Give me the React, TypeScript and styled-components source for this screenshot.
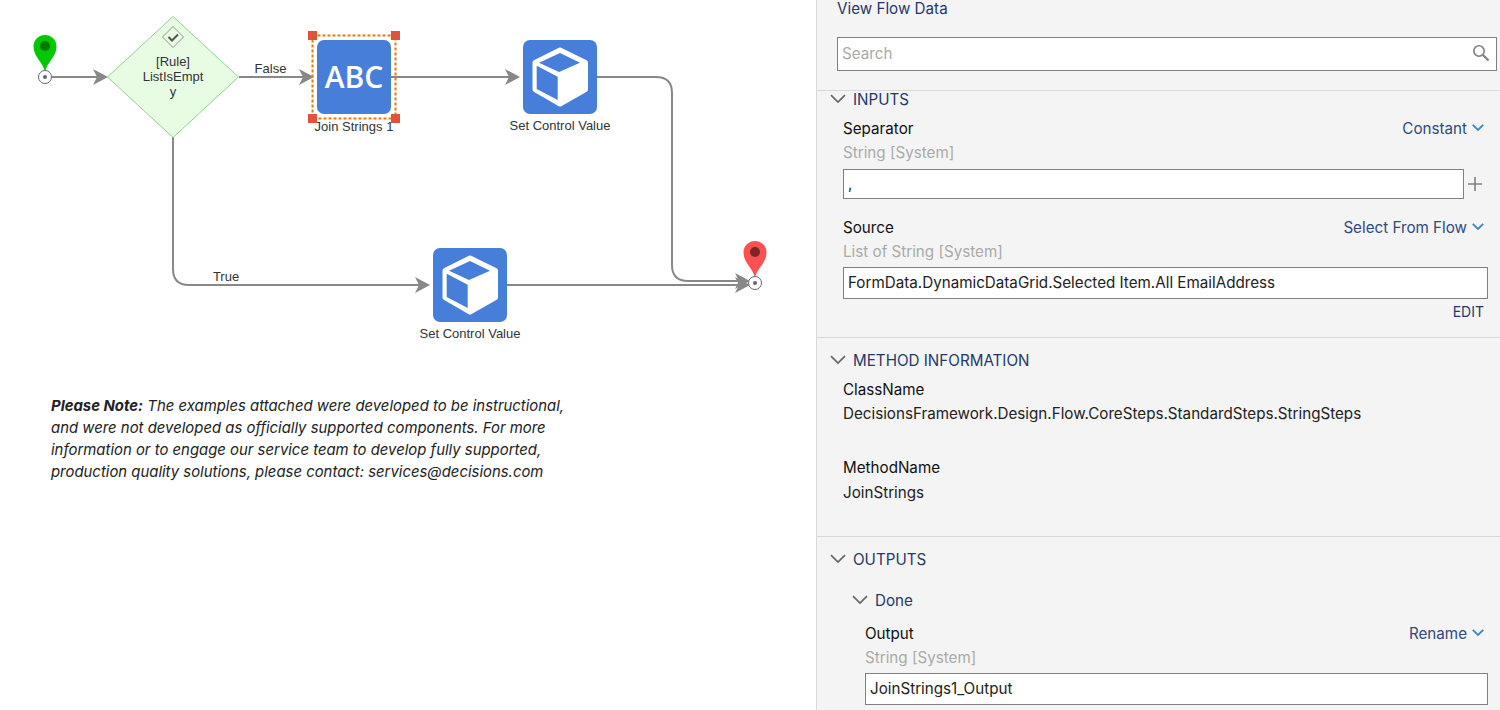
import React from "react";
import styled, { createGlobalStyle } from "styled-components";

const Global = createGlobalStyle`
  html, body { margin: 0; padding: 0; height: 710px; overflow: hidden; background: #fff; }
  * { box-sizing: border-box; }
`;

const Page = styled.div`
  display: flex;
  width: 1500px;
  height: 710px;
  overflow: hidden;
`;

const Canvas = styled.div`
  position: relative;
  width: 816px;
  flex: none;
  padding: 395px 0 0 51px;
  background: #fff;
`;

const Wires = styled.svg`
  position: absolute;
  left: 0;
  top: 0;
`;

const Note = styled.p`
  margin: 0;
  width: 560px;
  font: italic 14.9px/22px Inter, sans-serif;
  color: #222;
  white-space: nowrap;
  b { font-weight: 700; }
`;

const NodeLabel = styled.span<{ $x: number; $y: number }>`
  position: absolute;
  left: ${(p) => p.$x}px;
  top: ${(p) => p.$y}px;
  transform: translate(-50%, -50%);
  font: 13px/15px "Liberation Sans", Arial, sans-serif;
  color: #333;
  white-space: nowrap;
  text-align: center;
`;

const StepIcon = styled.div<{ $x: number; $y: number }>`
  position: absolute;
  left: ${(p) => p.$x}px;
  top: ${(p) => p.$y}px;
  width: 74px;
  height: 74px;
  border-radius: 7px;
  background: #477ed9;
  color: #fff;
  display: flex;
  align-items: center;
  justify-content: center;
`;

const AbcText = styled.span`
  font: 600 30px/1 "Open Sans", sans-serif;
  color: #fff;
`;

const SelectionFrame = styled.svg`
  position: absolute;
  left: 310px;
  top: 32px;
`;

const Handle = styled.span<{ $x: number; $y: number }>`
  position: absolute;
  left: ${(p) => p.$x}px;
  top: ${(p) => p.$y}px;
  width: 9px;
  height: 9px;
  background: #e0533a;
`;

const Panel = styled.aside`
  flex: 1;
  height: 710px;
  background: #f4f4f4;
  border-left: 1px solid #d9d9d9;
  font-family: Inter, sans-serif;
  font-size: 15.2px;
  color: #111;
  overflow: hidden;
`;

const Top = styled.div`
  padding: 0 3px 0 20px;
  height: 73px;
`;

const TopLink = styled.div`
  height: 17px;
  line-height: 17px;
  color: #26386b;
`;

const SearchBox = styled.div`
  margin-top: 20px;
  height: 34px;
  background: #fff;
  border: 1px solid #808080;
  display: flex;
  align-items: center;
  justify-content: space-between;
  padding: 0 6px 2px 4px;
  color: #aaa;
`;

const Section = styled.section<{ $h: number; $line?: boolean; $mt?: number }>`
  height: ${(p) => p.$h}px;
  margin-top: ${(p) => p.$mt ?? 0}px;
  border-top: ${(p) => (p.$line ? "1px solid #d9d9d9" : "none")};
  padding: 0 12px 0 13px;
`;

const SectionHead = styled.div<{ $mt: number }>`
  margin-top: ${(p) => p.$mt}px;
  height: 18px;
  display: flex;
  align-items: center;
  gap: 7px;
  color: #26386b;
`;

const SubHead = styled(SectionHead)`
  padding-left: 22px;
`;

const FieldHead = styled.div<{ $mt: number; $indent?: number }>`
  margin-top: ${(p) => p.$mt}px;
  padding-left: ${(p) => 13 + (p.$indent ?? 0)}px;
  padding-right: 4px;
  height: 20px;
  display: flex;
  align-items: center;
  justify-content: space-between;
`;

const Mode = styled.span`
  display: flex;
  align-items: center;
  gap: 5px;
  color: #2f4a80;
`;

const TypeHint = styled.div<{ $indent?: number }>`
  margin-top: 5px;
  padding-left: ${(p) => 13 + (p.$indent ?? 0)}px;
  height: 20px;
  line-height: 20px;
  color: #aaa;
`;

const InputRow = styled.div<{ $indent?: number; $mt: number }>`
  margin-top: ${(p) => p.$mt}px;
  margin-left: ${(p) => 13 + (p.$indent ?? 0)}px;
  display: flex;
  align-items: center;
`;

const TextBox = styled.div<{ $h: number }>`
  flex: 1;
  height: ${(p) => p.$h}px;
  line-height: ${(p) => p.$h - 2}px;
  background: #fff;
  border: 1px solid #808080;
  padding-left: 4px;
  white-space: nowrap;
  color: #222;
`;

const PlusMark = styled.span`
  width: 24px;
  padding-right: 6px;
  display: flex;
  justify-content: flex-end;
  color: #808080;
`;

const EditLink = styled.div`
  margin-top: 4px;
  text-align: right;
  height: 18px;
  line-height: 18px;
  font-size: 14px;
  color: #26386b;
  padding-right: 4px;
`;

const Value = styled.div<{ $mt: number; $strong?: boolean }>`
  margin-top: ${(p) => p.$mt}px;
  padding-left: 13px;
  height: 20px;
  line-height: 20px;
  color: ${(p) => (p.$strong ? "#111" : "#222")};
  white-space: nowrap;
`;

const Chevron = ({ color = "#666", w = 16 }: { color?: string; w?: number }) => (
  <svg width={w} height={w * 0.6} viewBox="0 0 16 9.6" fill="none">
    <path d="M1 1.2 L8 8 L15 1.2" stroke={color} strokeWidth={w < 14 ? 2.4 : 1.7} />
  </svg>
);

const Cube = () => (
  <svg width="74" height="74" viewBox="0 0 74 74">
    <path d="M37 10 L62.500 22.500 V49.500 L37 64 L12 49.500 V22.500 Z" fill="#fff" stroke="#fff" strokeWidth="5" strokeLinejoin="round" />
    <path d="M37 13 L57 22.7 L36 32 L16 22.7 Z" fill="#477ed9" />
    <path d="M13.7 25.7 L34.7 36.7 V60 L13.7 49 Z" fill="#477ed9" />
  </svg>
);

const wire = "#888";

const Arrow = ({ x, y }: { x: number; y: number }) => (
  <path d={`M${x} ${y} L${x - 15} ${y - 8} L${x - 11} ${y} L${x - 15} ${y + 8} Z`} fill={wire} />
);

const Pin = ({ x, top, fill, dot }: { x: number; top: number; fill: string; dot: string }) => (
  <g transform={`translate(${x} ${top})`}>
    <path d="M0 37 C-2 27 -11.5 22 -11.5 11.5 A11.5 11.5 0 0 1 11.5 11.5 C11.5 22 2 27 0 37 Z" fill={fill} />
    <circle cx="0" cy="11" r="5" fill={dot} />
  </g>
);

const Terminal = ({ x, y }: { x: number; y: number }) => (
  <g>
    <circle cx={x} cy={y} r="6.5" fill="#fff" stroke="#666" strokeWidth="1" />
    <circle cx={x} cy={y} r="2" fill="#666" />
  </g>
);

export default function App() {
  return (
    <Page>
      <Global />
      <Canvas>
        <Wires width="816" height="360" viewBox="0 0 816 360">
          <g fill="none" stroke={wire} strokeWidth="2">
            <path d="M52 77 H100" />
            <path d="M239 77 H306" />
            <path d="M391 77 H512" />
            <path d="M597 77 H656 Q672 77 672 93 V265 Q672 281 688 281 H742" />
            <path d="M173 137 V269 Q173 285 189 285 H422" />
            <path d="M507 285 H742" />
          </g>
          <Arrow x={108} y={77} />
          <Arrow x={314} y={77} />
          <Arrow x={520} y={77} />
          <Arrow x={430} y={285} />
          <Arrow x={750} y={281} />
          <Arrow x={750} y={285} />
          <path d="M107.500 77 L173 16.500 L238.500 77 L173 137.500 Z" fill="#e8fce4" stroke="#8fd48a" strokeWidth="1" />
          <path d="M173 26.500 L183.500 37 L173 47.500 L162.500 37 Z" fill="#e8fce4" stroke="#8a9a8a" strokeWidth="1" />
          <path d="M168.500 37 L172 40.500 L178 34.500" fill="none" stroke="#555" strokeWidth="2" />
          <Pin x={45} top={35} fill="#00c800" dot="#007a00" />
          <Terminal x={45} y={77} />
          <Pin x={755} top={241} fill="#fa5252" dot="#7d2424" />
          <Terminal x={755} y={283} />
        </Wires>

        <NodeLabel $x={173} $y={76}>[Rule]<br />ListIsEmpt<br />y</NodeLabel>
        <NodeLabel $x={270.500} $y={68}>False</NodeLabel>
        <NodeLabel $x={226} $y={276}>True</NodeLabel>

        <StepIcon $x={317} $y={40}><AbcText>ABC</AbcText></StepIcon>
        <SelectionFrame width="90" height="90" viewBox="0 0 90 90">
          <rect x="2.500" y="3.500" width="83" height="83" fill="none" stroke="#e57a10" strokeWidth="2" strokeDasharray="3 2" />
        </SelectionFrame>
        <Handle $x={308} $y={31} />
        <Handle $x={391} $y={31} />
        <Handle $x={308} $y={114} />
        <Handle $x={391} $y={114} />
        <NodeLabel $x={354} $y={125.500}>Join Strings 1</NodeLabel>

        <StepIcon $x={523} $y={40}><Cube /></StepIcon>
        <NodeLabel $x={560} $y={125}>Set Control Value</NodeLabel>

        <StepIcon $x={433} $y={248}><Cube /></StepIcon>
        <NodeLabel $x={470} $y={333}>Set Control Value</NodeLabel>

        <Note>
          <b>Please Note:</b> The examples attached were developed to be instructional,<br />
          and were not developed as officially supported components. For more<br />
          information or to engage our service team to develop fully supported,<br />
          production quality solutions, please contact: services@decisions.com
        </Note>
      </Canvas>

      <Panel>
        <Top>
          <TopLink>View Flow Data</TopLink>
          <SearchBox>
            <span>Search</span>
            <svg width="18" height="18" viewBox="0 0 18 18" fill="none" stroke="#808080">
              <circle cx="7" cy="7" r="5.2" strokeWidth="1.6" />
              <path d="M11 11 L16.500 16.500" strokeWidth="2.2" />
            </svg>
          </SearchBox>
        </Top>

        <Section $h={247} $line $mt={17}>
          <SectionHead $mt={-1}><Chevron />INPUTS</SectionHead>
          <FieldHead $mt={10}>
            <span>Separator</span>
            <Mode>Constant <Chevron color="#3a87c8" w={12} /></Mode>
          </FieldHead>
          <TypeHint>String [System]</TypeHint>
          <InputRow $mt={6}>
            <TextBox $h={30}>,</TextBox>
            <PlusMark>
              <svg width="14" height="14" viewBox="0 0 14 14" stroke="#808080" strokeWidth="1.600">
                <path d="M7 0 V14 M0 7 H14" />
              </svg>
            </PlusMark>
          </InputRow>
          <FieldHead $mt={18}>
            <span>Source</span>
            <Mode>Select From Flow <Chevron color="#3a87c8" w={12} /></Mode>
          </FieldHead>
          <TypeHint>List of String [System]</TypeHint>
          <InputRow $mt={5}>
            <TextBox $h={32}>FormData.DynamicDataGrid.Selected Item.All EmailAddress</TextBox>
          </InputRow>
          <EditLink>EDIT</EditLink>
        </Section>

        <Section $h={199} $line>
          <SectionHead $mt={13}><Chevron />METHOD INFORMATION</SectionHead>
          <Value $mt={11} $strong>ClassName</Value>
          <Value $mt={4}>DecisionsFramework.Design.Flow.CoreSteps.StandardSteps.StringSteps</Value>
          <Value $mt={34} $strong>MethodName</Value>
          <Value $mt={5}>JoinStrings</Value>
        </Section>

        <Section $h={180} $line>
          <SectionHead $mt={13}><Chevron />OUTPUTS</SectionHead>
          <SubHead $mt={23}><Chevron />Done</SubHead>
          <FieldHead $mt={14} $indent={22}>
            <span>Output</span>
            <Mode>Rename <Chevron color="#3a87c8" w={12} /></Mode>
          </FieldHead>
          <TypeHint $indent={22}>String [System]</TypeHint>
          <InputRow $mt={5} $indent={22}>
            <TextBox $h={32}>JoinStrings1_Output</TextBox>
          </InputRow>
        </Section>
      </Panel>
    </Page>
  );
}
